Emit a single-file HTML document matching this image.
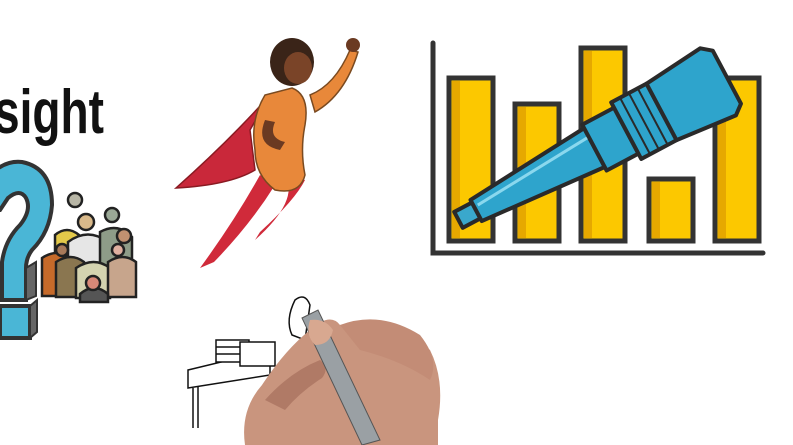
<!DOCTYPE html>
<html><head><meta charset="utf-8"><style>
html,body{margin:0;padding:0;background:#fff;width:793px;height:445px;overflow:hidden}
svg{display:block}
</style></head><body>
<svg width="793" height="445" viewBox="0 0 793 445" xmlns="http://www.w3.org/2000/svg">
<rect width="793" height="445" fill="#fff"/>
<text x="-6" y="133" font-family="Liberation Sans, sans-serif" font-weight="bold" font-size="62" fill="#111" textLength="110" lengthAdjust="spacingAndGlyphs">sight</text>

<!-- crowd -->
<g stroke="#222" stroke-width="2.5">
<circle cx="75" cy="200" r="7" fill="#b8b6a6"/>
<circle cx="112" cy="215" r="7" fill="#9aa896"/>
<circle cx="86" cy="222" r="8" fill="#d9b98a"/>
<path d="M55 235 q12 -10 24 0 v25 h-24z" fill="#e3c94a"/>
<path d="M68 242 q20 -15 40 0 v30 h-40z" fill="#e6e6e6"/>
<path d="M100 232 q18 -10 32 5 v35 h-32z" fill="#8e9c88"/>
<path d="M42 258 q15 -10 28 0 v38 h-28z" fill="#c66a2a"/>
<path d="M56 262 q15 -10 28 0 v35 h-28z" fill="#8a7650"/>
<path d="M76 268 q18 -12 34 0 v30 h-34z" fill="#d4d3b0"/>
<path d="M108 262 q15 -10 28 0 v35 h-28z" fill="#c7a58c"/>
<path d="M80 294 q14 -12 28 0 v8 h-28z" fill="#555"/>
<circle cx="93" cy="283" r="7" fill="#d88878"/>
<circle cx="62" cy="250" r="6" fill="#a87a5a"/>
<circle cx="118" cy="250" r="6" fill="#e0b0a0"/>
<circle cx="124" cy="236" r="7" fill="#c09070"/>
</g>

<!-- question mark -->
<path d="M-10 175 Q5 160 22 162 Q52 168 52 205 Q50 232 32 250 Q26 258 26 268 L26 300 L2 300 L2 262 Q5 240 20 225 Q32 210 26 198 Q20 188 8 198 L0 210 L-10 210Z" fill="#4ab6d6" stroke="#333" stroke-width="4"/>
<path d="M26 268 L36 262 L36 296 L26 300Z" fill="#666" stroke="#333" stroke-width="2"/>
<rect x="0" y="306" width="30" height="32" fill="#4ab6d6" stroke="#333" stroke-width="4"/>
<path d="M30 306 l7 -6 v32 l-7 6z" fill="#666" stroke="#333" stroke-width="2"/>

<!-- superhero cape -->
<path d="M270 95 Q230 140 176 188 Q230 185 255 170 L250 130Z" fill="#c9283a" stroke="#8a1a22" stroke-width="1.5"/>
<path d="M260 175 Q235 220 200 268 L214 262 Q250 225 275 185Z" fill="#d02a3a"/>
<path d="M285 175 Q300 200 255 240 L260 232 Q295 200 305 180Z" fill="#d02a3a"/>
<path d="M265 95 Q250 120 255 150 Q255 175 275 190 Q300 195 305 175 Q300 150 305 125 Q310 95 292 88 Z" fill="#e8883a" stroke="#7a4a20" stroke-width="1.5"/>
<path d="M310 95 Q335 85 350 50 L358 52 Q345 95 315 112Z" fill="#e8883a" stroke="#7a4a20" stroke-width="1.5"/>
<circle cx="353" cy="45" r="7" fill="#6b3a22"/>
<path d="M265 120 Q255 145 280 150 L285 142 Q268 138 275 122Z" fill="#6b3a22"/>
<ellipse cx="292" cy="62" rx="22" ry="24" fill="#3a2418"/>
<ellipse cx="298" cy="68" rx="14" ry="16" fill="#7a4428"/>

<!-- chart -->
<g stroke="#333" stroke-width="5" fill="#fcc800">
<rect x="449" y="78" width="44" height="163"/>
<rect x="515" y="104" width="44" height="137"/>
<rect x="581" y="48" width="44" height="193"/>
<rect x="649" y="179" width="44" height="62"/>
<rect x="715" y="78" width="44" height="163"/>
</g>
<g fill="#e6a800">
<rect x="452" y="81" width="8" height="157"/>
<rect x="518" y="107" width="8" height="131"/>
<rect x="584" y="51" width="8" height="187"/>
<rect x="652" y="182" width="8" height="56"/>
<rect x="718" y="81" width="8" height="157"/>
</g>
<path d="M433 43 V253 H763" fill="none" stroke="#333" stroke-width="5" stroke-linecap="round"/>

<!-- telescope -->
<g transform="translate(462,218) rotate(-28)" stroke="#2a2a2a" stroke-width="4" stroke-linejoin="round">
<rect x="-4" y="-9" width="20" height="18" fill="#3aa8cc"/>
<path d="M16 -12 L150 -22 L150 22 L16 12Z" fill="#2ea4cc"/>
<rect x="150" y="-26" width="36" height="52" fill="#2ea4cc"/>
<rect x="186" y="-32" width="40" height="64" fill="#2ea4cc"/>
<path d="M226 -32 L290 -38 L300 -30 L300 30 L290 38 L226 32Z" fill="#2ea4cc"/>
<line x1="196" y1="-32" x2="196" y2="32" stroke-width="2"/>
<line x1="206" y1="-32" x2="206" y2="32" stroke-width="2"/>
<line x1="216" y1="-32" x2="216" y2="32" stroke-width="2"/>
<path d="M20 -4 L148 -12" stroke="#8ad8ee" stroke-width="3" fill="none"/>
</g>

<!-- desk drawing -->
<g fill="#fff" stroke="#111" stroke-width="1.5">
<path d="M188 370 L250 355 L270 360 L270 375 L188 388Z"/>
<line x1="193" y1="388" x2="193" y2="428"/><line x1="198" y1="387" x2="198" y2="428"/>
<rect x="216" y="340" width="33" height="22"/>
<line x1="216" y1="347" x2="249" y2="347"/><line x1="216" y1="354" x2="249" y2="354"/>
<rect x="240" y="342" width="35" height="24"/>
<path d="M292 335 Q285 320 295 300 Q305 292 310 305 L305 340Z"/>
</g>

<!-- hand -->
<path d="M245 445 Q240 410 262 385 Q285 350 310 330 Q330 312 340 325 Q360 320 380 325 Q410 330 430 350 Q445 380 438 420 L438 445Z" fill="#c9957e"/>
<path d="M265 400 Q290 372 320 360 Q330 368 322 378 Q300 392 285 410Z" fill="#b07a66"/>
<path d="M302 318 L318 310 L380 440 L362 445Z" fill="#9aa0a4" stroke="#555" stroke-width="1"/>
<path d="M310 320 Q325 318 333 330 Q330 345 315 345 Q305 335 310 320Z" fill="#d8a890"/>
<path d="M340 325 Q380 310 420 335 Q440 360 430 380 Q400 360 360 350Z" fill="#c38c76"/>
</svg>
</body></html>
